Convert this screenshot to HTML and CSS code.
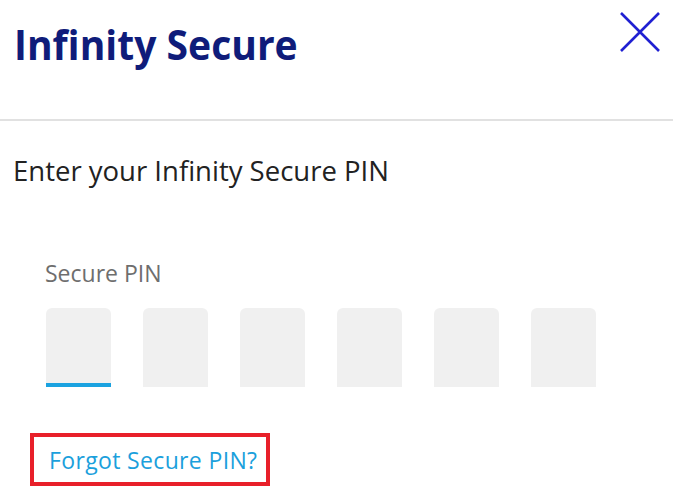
FILE: index.html
```html
<!DOCTYPE html>
<html lang="en">
<head>
<meta charset="utf-8">
<title>Infinity Secure</title>
<link rel="stylesheet" href="styles.css">
</head>
<body>
<header class="header">
  <h1 class="title">Infinity Secure</h1>
  <button class="close" aria-label="Close">
    <svg width="40" height="40" viewBox="0 0 40 40"><path d="M1 1 L39 39 M39 1 L1 39" stroke="#2020d2" stroke-width="2.6" fill="none"/></svg>
  </button>
</header>
<main class="content">
  <p class="prompt">Enter your Infinity Secure PIN</p>
  <div class="pin">
    <div class="pin-label">Secure PIN</div>
    <div class="pin-boxes">
      <div class="pin-box active"></div>
      <div class="pin-box"></div>
      <div class="pin-box"></div>
      <div class="pin-box"></div>
      <div class="pin-box"></div>
      <div class="pin-box"></div>
    </div>
  </div>
  <a class="forgot" href="#">Forgot Secure PIN?</a>
</main>
</body>
</html>
```

FILE: styles.css
```css
* { box-sizing: border-box; }
html, body { margin: 0; padding: 0; background: #fff; }
body { font-family: "Open Sans", "Noto Sans", sans-serif; width: 673px; height: 493px; overflow: hidden; }

.header {
  display: flex;
  justify-content: space-between;
  align-items: flex-start;
  height: 121px;
  padding: 15px 13px 0 14px;
  border-bottom: 2px solid #e1e1e1;
}
.title {
  margin: 0;
  font-size: 42px;
  line-height: 58px;
  font-weight: 700;
  color: #0f1c7a;
  transform: scaleX(0.93);
  transform-origin: left center;
}
.close {
  border: 0;
  background: none;
  padding: 0;
  margin-top: -3px;
  width: 40px;
  height: 40px;
}
.close svg { display: block; }

.content { padding: 0 0 0 13px; }
.prompt {
  margin: 31px 0 0;
  font-size: 27.5px;
  line-height: 38px;
  color: #222;
}
.pin { padding-left: 33px; margin-top: 68px; }
.pin-label {
  font-size: 23px;
  line-height: 31px;
  color: #6e6e6e;
  margin-left: -1px;
}
.pin-boxes {
  display: flex;
  gap: 32px;
  margin-top: 19px;
}
.pin-box {
  width: 65px;
  height: 79px;
  background: #f0f0f0;
  border-radius: 6px 6px 0 0;
}
.pin-box.active { border-bottom: 4px solid #1aa2e0; }

.forgot {
  display: inline-block;
  margin: 46px 0 0 17px;
  padding: 8px 9px 6px 15px;
  border: 4px solid #e8202a;
  font-size: 23px;
  letter-spacing: 0.35px;
  line-height: 31px;
  color: #1ba0dc;
  text-decoration: none;
}
```
